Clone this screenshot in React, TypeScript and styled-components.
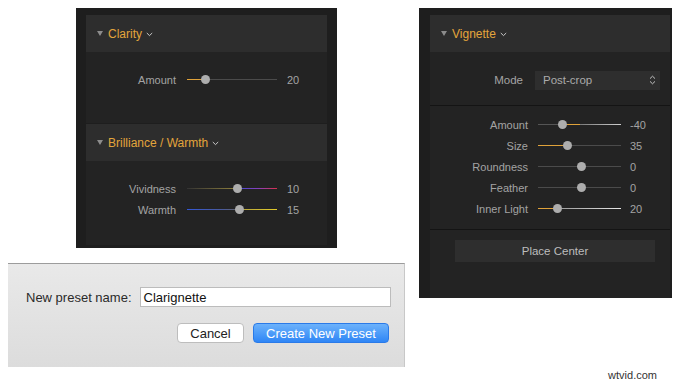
import * as React from 'react';
import styled, { createGlobalStyle } from 'styled-components';

const GlobalStyle = createGlobalStyle`
  html, body {
    margin: 0;
    padding: 0;
    background: #ffffff;
  }
  body {
    font-family: "Liberation Sans", Arial, sans-serif;
  }
`;

const Canvas = styled.div`
  position: relative;
  width: 685px;
  height: 385px;
  display: flex;
  overflow: hidden;
`;

const LeftColumn = styled.div`
  width: 405px;
  display: flex;
  flex-direction: column;
`;

const Panel = styled.div<{ $w: number; $h: number; $ml: number; $pad: string }>`
  box-sizing: border-box;
  width: ${(p) => p.$w}px;
  height: ${(p) => p.$h}px;
  margin: 8px 0 0 ${(p) => p.$ml}px;
  padding: ${(p) => p.$pad};
  background: #1e1e1e;
  display: flex;
  flex-direction: column;
  gap: 1px;
`;

const Section = styled.div<{ $grow?: boolean }>`
  background: #232323;
  display: flex;
  flex-direction: column;
  flex: ${(p) => (p.$grow ? 1 : 'none')};
`;

const Header = styled.div`
  height: 37px;
  background: #2d2d2d;
  display: flex;
  align-items: center;
  padding-left: 11px;
`;

const Triangle = styled.span`
  width: 0;
  height: 0;
  border-left: 3.5px solid transparent;
  border-right: 3.5px solid transparent;
  border-top: 5px solid #8c8c8c;
  margin-right: 5px;
`;

const Title = styled.span`
  color: #e3a53c;
  font-size: 12px;
`;

const Chevron = styled.svg`
  margin-left: 4px;
  margin-top: 1px;
`;

const Body = styled.div<{ $h?: number; $pt: number; $pb?: number; $line?: boolean }>`
  ${(p) => (p.$h ? `height: ${p.$h}px;` : '')}
  box-sizing: border-box;
  padding-top: ${(p) => p.$pt}px;
  padding-bottom: ${(p) => p.$pb ?? 0}px;
  ${(p) => (p.$line ? 'border-bottom: 1px solid #141414;' : '')}
`;

const Row = styled.div`
  display: flex;
  align-items: center;
  height: 21px;
`;

const Label = styled.span<{ $w: number }>`
  width: ${(p) => p.$w}px;
  flex: none;
  text-align: right;
  color: #a3a3a3;
  font-size: 11px;
  white-space: nowrap;
`;

const Value = styled.span<{ $ml: number }>`
  margin-left: ${(p) => p.$ml}px;
  color: #a3a3a3;
  font-size: 11px;
`;

const Track = styled.div<{ $bg: string; $w: number; $ml: number }>`
  position: relative;
  flex: none;
  width: ${(p) => p.$w}px;
  margin-left: ${(p) => p.$ml}px;
  height: 1px;
  background: ${(p) => p.$bg};
`;

const Knob = styled.span`
  position: absolute;
  top: -4px;
  width: 9px;
  height: 9px;
  margin-left: -4.5px;
  border-radius: 50%;
  background: #adadad;
`;

const ModeRow = styled.div`
  box-sizing: border-box;
  height: 53px;
  padding-top: 3px;
  display: flex;
  align-items: center;
`;

const ModeLabel = styled.span`
  width: 93px;
  text-align: right;
  color: #a3a3a3;
  font-size: 11.5px;
`;

const Select = styled.div`
  box-sizing: border-box;
  margin-left: 12px;
  width: 125px;
  height: 19px;
  background: #2e2e2e;
  display: flex;
  align-items: center;
  justify-content: space-between;
  padding: 0 4px 0 8px;
  color: #ababab;
  font-size: 11.5px;
`;

const ButtonArea = styled.div`
  padding: 10px 0 0 25px;
`;

const PlaceButton = styled.div`
  width: 200px;
  height: 22px;
  background: #2e2e2e;
  color: #bdbdbd;
  font-size: 11.5px;
  display: flex;
  align-items: center;
  justify-content: center;
`;

const Dialog = styled.div`
  box-sizing: border-box;
  width: 397px;
  height: 104px;
  margin: 15px 0 0 8px;
  border-top: 1px solid #9c9c9c;
  border-right: 1px solid #c8c8c8;
  background: linear-gradient(#e9e9e9, #dcdcdc);
  padding: 23px 13px 0 18px;
  font-size: 13px;
  color: #2a2a2a;
`;

const FieldRow = styled.div`
  display: flex;
  align-items: center;
  gap: 8px;
`;

const Input = styled.div`
  box-sizing: border-box;
  flex: 1;
  height: 20px;
  background: #ffffff;
  border: 1px solid #bcbcbc;
  padding-left: 3px;
  display: flex;
  align-items: center;
  color: #111;
`;

const Buttons = styled.div`
  display: flex;
  justify-content: flex-end;
  gap: 9px;
  margin-top: 16px;
  padding-right: 2px;
`;

const DialogButton = styled.div<{ $primary?: boolean }>`
  box-sizing: border-box;
  height: 20px;
  width: ${(p) => (p.$primary ? 136 : 67)}px;
  border-radius: 4px;
  display: flex;
  align-items: center;
  justify-content: center;
  font-size: 13px;
  ${(p) =>
    p.$primary
      ? `background: linear-gradient(#6cb2fb, #2f86f6);
         color: #ffffff;
         border: 1px solid #2a7ae8;`
      : `background: #ffffff;
         color: #222;
         border: 1px solid #bdbdbd;`}
`;

const Watermark = styled.span`
  position: absolute;
  right: 28px;
  bottom: 4px;
  font-size: 11px;
  color: #333;
`;

const ORANGE = '#e0a23a';
const GRAY = '#4b4b4b';

type Layout = { label: number; gap: number; track: number; vgap: number };

type SliderProps = {
  label: string;
  value: string;
  pos: number;
  bg: string;
  layout: Layout;
};

const Slider: React.FC<SliderProps> = ({ label, value, pos, bg, layout }) => (
  <Row>
    <Label $w={layout.label}>{label}</Label>
    <Track $bg={bg} $w={layout.track} $ml={layout.gap}>
      <Knob style={{ left: `${pos * 100}%` }} />
    </Track>
    <Value $ml={layout.vgap}>{value}</Value>
  </Row>
);

const SectionHeader: React.FC<{ title: string }> = ({ title }) => (
  <Header>
    <Triangle />
    <Title>{title}</Title>
    <Chevron width="7" height="5" viewBox="0 0 7 5">
      <path d="M0.8 1 L3.5 3.6 L6.2 1" fill="none" stroke="#c9c9c9" strokeWidth="1" />
    </Chevron>
  </Header>
);

const split = (p: number, a: string, b: string) =>
  `linear-gradient(to right, ${a} 0%, ${a} ${p}%, ${b} ${p}%, ${b} 100%)`;

const L: Layout = { label: 90, gap: 11, track: 90, vgap: 10 };
const R: Layout = { label: 98, gap: 10, track: 83, vgap: 9 };

export default function App() {
  return (
    <>
      <GlobalStyle />
      <Canvas>
        <LeftColumn>
          <Panel $w={261} $h={240} $ml={76} $pad="7px 10px 3px">
            <Section>
              <SectionHeader title="Clarity" />
              <Body $h={71} $pt={17}>
                <Slider label="Amount" value="20" pos={0.21} bg={split(21, ORANGE, GRAY)} layout={L} />
              </Body>
            </Section>
            <Section $grow>
              <SectionHeader title="Brilliance / Warmth" />
              <Body $pt={17}>
                <Slider
                  label="Vividness"
                  value="10"
                  pos={0.56}
                  bg="linear-gradient(to right, #333 0%, #8a7c3c 52%, #4e4ad0 60%, #8a40b8 80%, #d8304c 100%)"
                  layout={L}
                />
                <Slider
                  label="Warmth"
                  value="15"
                  pos={0.58}
                  bg="linear-gradient(to right, #3458d6 0%, #4a5a9a 40%, #666 58%, #b8a63a 62%, #e2cb2a 100%)"
                  layout={L}
                />
              </Body>
            </Section>
          </Panel>
          <Dialog>
            <FieldRow>
              <span>New preset name:</span>
              <Input>Clarignette</Input>
            </FieldRow>
            <Buttons>
              <DialogButton>Cancel</DialogButton>
              <DialogButton $primary>Create New Preset</DialogButton>
            </Buttons>
          </Dialog>
        </LeftColumn>
        <Panel $w={253} $h={290} $ml={14} $pad="7px 2px 0 11px">
          <Section $grow>
            <SectionHeader title="Vignette" />
            <Body $pt={0} $line>
              <ModeRow>
                <ModeLabel>Mode</ModeLabel>
                <Select>
                  <span>Post-crop</span>
                  <svg width="7" height="10" viewBox="0 0 7 10">
                    <path d="M1 3.6 L3.5 1.2 L6 3.6 M1 6.4 L3.5 8.8 L6 6.4" fill="none" stroke="#c4c4c4" strokeWidth="1" />
                  </svg>
                </Select>
              </ModeRow>
            </Body>
            <Body $pt={8} $pb={10} $line>
              <Slider
                label="Amount"
                value="-40"
                pos={0.3}
                bg={`linear-gradient(to right, #555 0%, #555 30%, ${ORANGE} 30%, ${ORANGE} 50%, #7a7a7a 50%, #cfcfcf 100%)`}
                layout={R}
              />
              <Slider label="Size" value="35" pos={0.36} bg={split(36, ORANGE, GRAY)} layout={R} />
              <Slider label="Roundness" value="0" pos={0.52} bg={GRAY} layout={R} />
              <Slider label="Feather" value="0" pos={0.52} bg={GRAY} layout={R} />
              <Slider
                label="Inner Light"
                value="20"
                pos={0.23}
                bg={`linear-gradient(to right, ${ORANGE} 0%, ${ORANGE} 23%, #9a9a9a 23%, #e6e6e6 100%)`}
                layout={R}
              />
            </Body>
            <ButtonArea>
              <PlaceButton>Place Center</PlaceButton>
            </ButtonArea>
          </Section>
        </Panel>
        <Watermark>wtvid.com</Watermark>
      </Canvas>
    </>
  );
}
